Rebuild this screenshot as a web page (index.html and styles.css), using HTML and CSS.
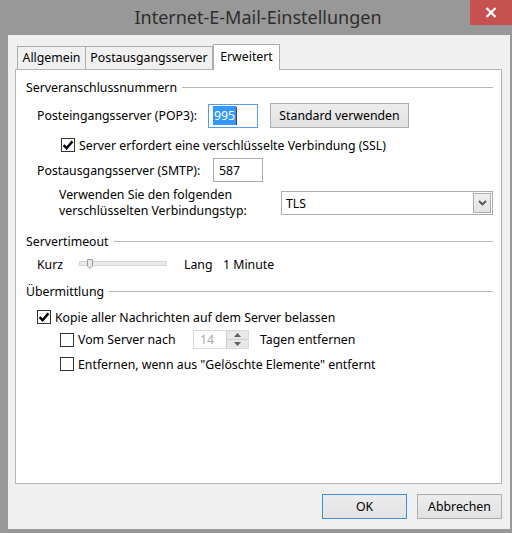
FILE: index.html
```html
<!DOCTYPE html>
<html lang="de">
<head>
<meta charset="utf-8">
<title>Internet-E-Mail-Einstellungen</title>
<link rel="stylesheet" href="styles.css">
</head>
<body>
<div class="window">
  <div class="titlebar">
    <span class="title">Internet-E-Mail-Einstellungen</span>
    <div class="close">
      <svg width="12" height="11" viewBox="0 0 12 11"><path d="M1.5 1 L10.5 10 M10.5 1 L1.5 10" stroke="#fff" stroke-width="2.2" fill="none"/></svg>
    </div>
  </div>
  <div class="client">
    <div class="tabs">
      <div class="tab t1">Allgemein</div>
      <div class="tab t2">Postausgangsserver</div>
      <div class="tab t3 active">Erweitert</div>
    </div>
    <div class="panel">
      <div class="group g1"><span class="gtext">Serveranschlussnummern</span><span class="rule"></span></div>

      <div class="row r-pop3">
        <span class="label l-pop3">Posteingangsserver (POP3):</span>
        <div class="input focus"><span class="sel">995</span><span class="caret"></span></div>
        <div class="btn b-std">Standard verwenden</div>
      </div>

      <div class="row r-ssl">
        <span class="cb checked"><svg width="12" height="12" viewBox="0 0 12 12"><path d="M1.6 6.2 L4.6 9.2 L10.4 2.4" stroke="#000" stroke-width="2.4" fill="none"/></svg></span>
        <span class="cbtext">Server erfordert eine verschlüsselte Verbindung (SSL)</span>
      </div>

      <div class="row r-smtp">
        <span class="label l-smtp">Postausgangsserver (SMTP):</span>
        <div class="input i-smtp">587</div>
      </div>

      <div class="row r-type">
        <span class="label l-type">Verwenden Sie den folgenden<br>verschlüsselten Verbindungstyp:</span>
        <div class="select">
          <span class="seltext">TLS</span>
          <span class="arrow"><svg width="9" height="6" viewBox="0 0 9 6"><path d="M1 1 L4.5 4.5 L8 1" stroke="#555" stroke-width="1.8" fill="none"/></svg></span>
        </div>
      </div>

      <div class="group g2"><span class="gtext">Servertimeout</span><span class="rule"></span></div>

      <div class="row r-slider">
        <span class="label l-kurz">Kurz</span>
        <div class="track">
          <svg class="thumb" width="6" height="10" viewBox="0 0 6 10"><path d="M0.5 0.5 H5.5 V7 L3 9.5 L0.5 7 Z" fill="#eaeaea" stroke="#9a9a9a" stroke-width="1"/></svg>
        </div>
        <span class="label l-lang">Lang</span>
        <span class="label">1 Minute</span>
      </div>

      <div class="group g3"><span class="gtext">Übermittlung</span><span class="rule"></span></div>

      <div class="row r-kopie">
        <span class="cb checked"><svg width="12" height="12" viewBox="0 0 12 12"><path d="M1.6 6.2 L4.6 9.2 L10.4 2.4" stroke="#000" stroke-width="2.4" fill="none"/></svg></span>
        <span class="cbtext">Kopie aller Nachrichten auf dem Server belassen</span>
      </div>

      <div class="row r-vom">
        <span class="cb"></span>
        <span class="cbtext l-vom">Vom Server nach</span>
        <div class="spin">
          <span class="spintext">14</span>
          <span class="spinbtns">
            <span class="sb up"><svg width="7" height="4" viewBox="0 0 7 4"><path d="M0 4 L3.5 0 L7 4 Z" fill="#606060"/></svg></span>
            <span class="sb down"><svg width="7" height="4" viewBox="0 0 7 4"><path d="M0 0 L3.5 4 L7 0 Z" fill="#606060"/></svg></span>
          </span>
        </div>
        <span class="label l-tagen">Tagen entfernen</span>
      </div>

      <div class="row r-entf">
        <span class="cb"></span>
        <span class="cbtext">Entfernen, wenn aus "Gelöschte Elemente" entfernt</span>
      </div>
    </div>
    <div class="buttons">
      <div class="btn b-ok">OK</div>
      <div class="btn b-cancel">Abbrechen</div>
    </div>
  </div>
</div>
</body>
</html>
```

FILE: styles.css
```css
html, body {
  margin: 0;
  padding: 0;
  background: #989898;
}
body {
  font-family: "Noto Sans", "Open Sans", sans-serif;
  font-size: 12.3px;
  color: #000;
}
.window {
  width: 512px;
  height: 533px;
  background: #989898;
  position: relative;
  overflow: hidden;
}
.titlebar {
  height: 35px;
  display: flex;
  align-items: center;
  justify-content: center;
  padding-left: 4px;
  box-sizing: border-box;
}
.title {
  font-size: 18px;
  color: #2e2e2e;
  margin-top: -1px;
}
.close {
  position: absolute;
  top: 0;
  right: 0;
  width: 42px;
  height: 25px;
  background: #c75050;
  display: flex;
  align-items: center;
  justify-content: center;
}
.client {
  margin-left: 8px;
  width: 502px;
  height: 494px;
  box-sizing: border-box;
  background: #f0f0f0;
  padding: 9px 8px 10px 7px;
  display: flex;
  flex-direction: column;
}
.tabs {
  height: 25px;
  display: flex;
  align-items: flex-end;
  padding-left: 2px;
}
.tab {
  box-sizing: border-box;
  height: 23px;
  background: #f0f0f0;
  border: 1px solid #acacac;
  border-bottom: none;
  display: flex;
  align-items: center;
  justify-content: center;
  padding-bottom: 1px;
}
.t1 { width: 69px; }
.t2 { width: 127px; border-left: none; }
.t3 { width: 67px; }
.tab.active {
  height: 26px;
  margin-bottom: -1px;
  background: #fff;
  position: relative;
  z-index: 1;
  padding-bottom: 3px;
}
.panel {
  box-sizing: border-box;
  height: 415px;
  background: #fff;
  border: 1px solid #b4b4b4;
  padding: 9px 8px 0 10px;
  display: flex;
  flex-direction: column;
}
.group {
  height: 16px;
  display: flex;
  align-items: center;
}
.gtext {
  white-space: nowrap;
  margin-right: 5px;
}
.rule {
  flex: 1;
  height: 1px;
  background: #b9b9b9;
  margin-top: 1px;
}
.row {
  display: flex;
  align-items: center;
  white-space: nowrap;
}
.label { white-space: nowrap; }
.r-pop3 { height: 25px; margin-top: 8px; padding-left: 11px; }
.l-pop3 { width: 171px; }
.input {
  box-sizing: border-box;
  width: 50px;
  height: 24px;
  border: 1px solid #abadb3;
  background: #fff;
  display: flex;
  align-items: center;
  padding-left: 4px;
}
.input.focus { border-color: #569de5; }
.sel {
  background: #3399ff;
  color: #fff;
  line-height: 19px;
  padding: 0 1px;
}
.caret {
  width: 1px;
  height: 18px;
  background: #6b3a1a;
}
.btn {
  box-sizing: border-box;
  height: 25px;
  background: linear-gradient(#ececec, #e2e2e2);
  border: 1px solid #adadad;
  display: flex;
  align-items: center;
  justify-content: center;
}
.b-std { width: 139px; margin-left: 12px; }
.r-ssl { height: 16px; margin-top: 9px; padding-left: 35px; }
.cb {
  box-sizing: border-box;
  width: 14px;
  height: 14px;
  border: 1px solid #333;
  background: #fff;
  display: flex;
  align-items: center;
  justify-content: center;
  flex: none;
}
.cbtext { margin-left: 4px; }
.r-smtp { height: 24px; margin-top: 5px; padding-left: 11px; }
.l-smtp { width: 176px; }
.i-smtp { padding-left: 5px; }
.r-type { height: 32px; margin-top: 5px; padding-left: 33px; }
.l-type { width: 222px; line-height: 16px; }
.select {
  box-sizing: border-box;
  width: 212px;
  height: 24px;
  border: 1px solid #acacac;
  background: #fff;
  display: flex;
  align-items: center;
  justify-content: space-between;
  padding: 0 1px 0 4px;
}
.arrow {
  box-sizing: border-box;
  width: 18px;
  height: 20px;
  border: 1px solid #acacac;
  background: linear-gradient(#f0f0f0, #e3e3e3);
  display: flex;
  align-items: center;
  justify-content: center;
}
.g2 { margin-top: 14px; }
.r-slider { height: 16px; margin-top: 7px; padding-left: 11px; }
.l-kurz { width: 42px; }
.track {
  box-sizing: border-box;
  width: 88px;
  height: 5px;
  background: #e7eaea;
  border: 1px solid #d6d6d6;
  position: relative;
  margin-top: -1px;
}
.thumb {
  position: absolute;
  left: 7px;
  top: -3px;
}
.l-lang { margin-left: 17px; width: 39px; }
.g3 { margin-top: 11px; }
.r-kopie { height: 16px; margin-top: 10px; padding-left: 11px; }
.r-vom { height: 19px; margin-top: 5px; padding-left: 34px; }
.l-vom { width: 115px; }
.spin {
  box-sizing: border-box;
  width: 56px;
  height: 19px;
  border: 1px solid #d9d9d9;
  background: #fff;
  display: flex;
}
.spintext {
  flex: 1;
  color: #a8a8a8;
  padding-left: 6px;
  line-height: 17px;
}
.spinbtns {
  width: 21px;
  display: flex;
  flex-direction: column;
  border-left: 1px solid #cfcfcf;
}
.sb {
  flex: 1;
  background: #e8e8e8;
  display: flex;
  align-items: center;
  justify-content: center;
}
.sb.up { border-bottom: 1px solid #cfcfcf; }
.l-tagen { margin-left: 11px; }
.r-entf { height: 16px; margin-top: 7px; padding-left: 34px; }
.buttons {
  display: flex;
  justify-content: flex-end;
  margin-top: 10px;
}
.b-ok { width: 85px; border-color: #3c8fdc; }
.b-cancel { width: 85px; margin-left: 10px; }
```
